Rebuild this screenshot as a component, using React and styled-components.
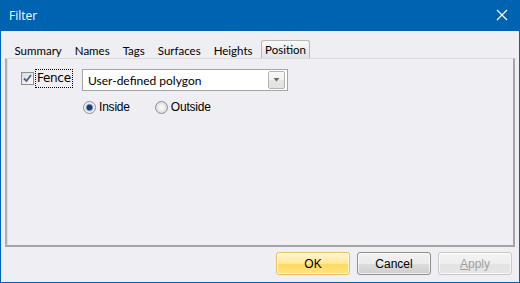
import { useState } from "react";
import styled, { createGlobalStyle } from "styled-components";

const Global = createGlobalStyle`
  html, body { margin: 0; padding: 0; background: #efeef3; }
  * { box-sizing: border-box; }
`;

const tabs = ["Summary", "Names", "Tags", "Surfaces", "Heights", "Position"];

const App = () => {
  const [tab, setTab] = useState("Position");
  const [fence, setFence] = useState(true);
  const [side, setSide] = useState("inside");

  return (
    <>
      <Global />
      <Window>
        <TitleBar>
          <span>Filter</span>
          <Close>
            <svg width="12" height="12" viewBox="0 0 12 12">
              <path d="M1 1 L11 11 M11 1 L1 11" stroke="#fff" strokeWidth="1.2" />
            </svg>
          </Close>
        </TitleBar>
        <Body>
          <TabStrip>
            {tabs.map((t) => (
              <Tab key={t} $active={t === tab} onClick={() => setTab(t)}>
                {t}
              </Tab>
            ))}
          </TabStrip>
          <Panel>
            <FenceRow>
              <CheckLabel onClick={() => setFence(!fence)}>
                <Check>
                  {fence && (
                    <svg width="11" height="11" viewBox="0 0 11 11">
                      <path d="M2 5.5 L4.5 8 L9 2" stroke="#4c5f9a" strokeWidth="1.8" fill="none" />
                    </svg>
                  )}
                </Check>
                <FocusText>Fence</FocusText>
              </CheckLabel>
              <Combo>
                <ComboText>User-defined polygon</ComboText>
                <DropButton>
                  <svg width="7" height="4" viewBox="0 0 7 4">
                    <path d="M0.5 0 H6.5 L3.5 3.5 Z" fill="#6a6a6a" />
                  </svg>
                </DropButton>
              </Combo>
            </FenceRow>
            <RadioRow>
              <RadioLabel onClick={() => setSide("inside")}>
                <Radio $on={side === "inside"} />
                Inside
              </RadioLabel>
              <RadioLabel onClick={() => setSide("outside")}>
                <Radio $on={side === "outside"} />
                Outside
              </RadioLabel>
            </RadioRow>
          </Panel>
          <Footer>
            <Button $variant="default">OK</Button>
            <Button>Cancel</Button>
            <Button disabled>
              <u>A</u>pply
            </Button>
          </Footer>
        </Body>
      </Window>
    </>
  );
};

export default App;

const Window = styled.div`
  width: 520px;
  height: 283px;
  display: flex;
  flex-direction: column;
  border: 1px solid #0063b1;
  border-top: none;
  background: #efeef3;
`;

const TitleBar = styled.div`
  height: 31px;
  margin: 0 -1px;
  background: #0063b1;
  color: #fff;
  font-family: "Open Sans", "Noto Sans", sans-serif;
  font-size: 12px;
  display: flex;
  align-items: center;
  justify-content: space-between;
  padding: 0 10px 1px 9px;
`;

const Close = styled.div`
  display: flex;
  align-items: center;
  width: 16px;
  justify-content: center;
`;

const Body = styled.div`
  flex: 1;
  display: flex;
  flex-direction: column;
  padding: 9px 4px 0 4px;
`;

const TabStrip = styled.div`
  display: flex;
  align-items: flex-end;
  height: 18px;
  padding-left: 3px;
  font-family: Lato, "Open Sans", sans-serif;
  font-size: 11.5px;
  color: #000;
`;

const Tab = styled.div`
  padding: 0 ${(p) => (p.$active ? "3px" : "5.5px")};
  height: ${(p) => (p.$active ? "18px" : "16px")};
  line-height: ${(p) => (p.$active ? "17px" : "16px")};
  margin-left: ${(p) => (p.$active ? "2px" : "0")};
  border: ${(p) => (p.$active ? "1px solid #b8b8b8" : "1px solid transparent")};
  border-bottom: none;
  border-radius: 3px 3px 0 0;
  background: ${(p) =>
    p.$active ? "linear-gradient(#fbfbfb, #eaeaea 60%, #dfe6ea)" : "transparent"};
  cursor: default;
`;

const Panel = styled.div`
  height: 189px;
  border-top: 1px solid #dcdcdc;
  border-left: 2px solid #aeaeb0;
  border-right: 2px solid #a5a5a8;
  border-bottom: 2px solid #a5a5a8;
  box-shadow: inset 1px 0 0 #dedede;
  padding: 10px 0 0 14px;
  display: flex;
  flex-direction: column;
`;

const FenceRow = styled.div`
  display: flex;
  align-items: flex-start;
`;

const CheckLabel = styled.div`
  display: flex;
  align-items: center;
  width: 61px;
  margin-top: 1px;
  cursor: default;
`;

const Check = styled.div`
  width: 13px;
  height: 13px;
  border: 1px solid #8e8f8f;
  background: linear-gradient(135deg, #dcdcdc, #fafafa);
  display: flex;
  align-items: center;
  justify-content: center;
`;

const FocusText = styled.span`
  margin-left: 2px;
  padding: 1px 1px 2px 1px;
  outline: 1px dotted #000;
  font-family: "DejaVu Sans", sans-serif;
  font-size: 12px;
  color: #000;
  letter-spacing: -0.3px;
`;

const Combo = styled.div`
  width: 206px;
  height: 22px;
  border: 1px solid #a4a4a4;
  background: #fff;
  display: flex;
  align-items: center;
  justify-content: space-between;
  padding: 0 2px 0 5px;
`;

const ComboText = styled.span`
  font-family: Lato, "Open Sans", sans-serif;
  font-size: 12px;
  color: #000;
`;

const DropButton = styled.div`
  width: 17px;
  height: 18px;
  border: 1px solid #b4b4b4;
  border-radius: 2px;
  background: linear-gradient(#fafafa, #f0f0f0 50%, #e6e6e6 51%, #e2e2e2);
  display: flex;
  align-items: center;
  justify-content: center;
`;

const RadioRow = styled.div`
  display: flex;
  gap: 25px;
  margin: 9px 0 0 62px;
`;

const RadioLabel = styled.div`
  display: flex;
  align-items: center;
  gap: 3px;
  font-family: "Liberation Sans", Arial, sans-serif;
  font-size: 12px;
  color: #000;
  letter-spacing: -0.2px;
  cursor: default;
`;

const Radio = styled.span`
  width: 13px;
  height: 13px;
  border-radius: 50%;
  border: 1px solid #8e8f8f;
  background: ${(p) =>
    p.$on
      ? "radial-gradient(circle, #1d3b78 0 2.5px, #6a85b8 3px, #e4e4e4 4px, #f4f4f4 5px)"
      : "radial-gradient(circle, #f6f6f6 0 2px, #dcdcdc 5.5px)"};
`;

const Footer = styled.div`
  flex: 1;
  display: flex;
  justify-content: flex-end;
  align-items: flex-start;
  gap: 7px;
  padding: 5px 3px 0 0;
`;

const Button = styled.button`
  width: 74px;
  height: 23px;
  font-family: "Liberation Sans", Arial, sans-serif;
  font-size: 12px;
  border-radius: 3px;
  padding: 0;
  color: ${(p) => (p.disabled ? "#a0a0a0" : "#000")};
  border: 1px solid
    ${(p) => (p.$variant === "default" ? "#e5c365" : p.disabled ? "#c8c8c8" : "#8d8d8d")};
  background: ${(p) =>
    p.$variant === "default"
      ? "linear-gradient(#fff6d0, #ffe89a 50%, #ffd95a 51%, #ffe286)"
      : p.disabled
      ? "linear-gradient(#f4f4f4, #eeeeee 50%, #e3e3e3 51%, #e6e6e6)"
      : "linear-gradient(#f2f2f2, #ebebeb 50%, #dddddd 51%, #cfcfcf)"};
  box-shadow: inset 0 0 0 1px rgba(255, 255, 255, 0.7);
  u { text-decoration: underline; }
`;
